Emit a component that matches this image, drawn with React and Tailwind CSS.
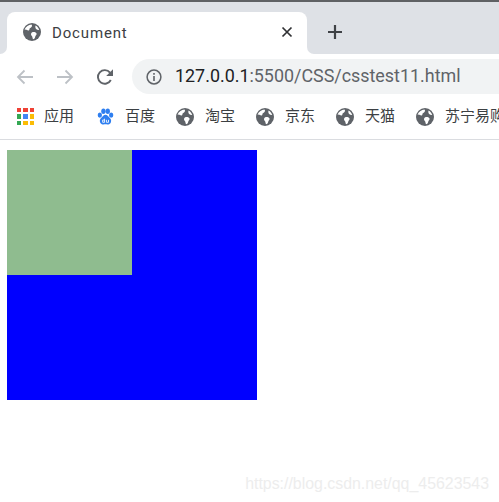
import React from 'react';

const Globe = ({ className }) => (
    <svg viewBox="0 0 18 18" className={className}>
        <circle cx="9" cy="9" r="9" fill="#5f6368" />
        <path d="M1.5 6.5 C3 3.5 5.5 1.8 8.5 1.6 C9.3 2.6 9.2 3.8 8 4.6 C7 5.2 6.5 5.4 6.4 6.4 C6.3 7.2 5.8 7.6 5.2 7.4 C4 7 2.8 6.6 1.5 6.5 Z" fill="#fff" />
        <path d="M9.2 9.2 C10.6 8.6 12.6 9 13.4 10.2 C13.9 11 13.4 11.8 12.8 12.4 C12.2 13 12.2 14 11.9 14.8 C11.5 15.9 10.6 16.4 10 16 C9.4 15.4 9.6 14.4 9.2 13.6 C8.8 12.8 8 12.2 8 11.2 C8 10.3 8.4 9.6 9.2 9.2 Z" fill="#fff" />
        <path d="M12.5 2.4 C14.4 3.4 15.7 5 16.2 7 C15 7.2 13.9 6.8 13.1 6 C12.4 5.2 12.1 3.6 12.5 2.4 Z" fill="#fff" />
    </svg>
);

const Paw = () => (
    <svg viewBox="0 0 18 18" className="w-[17px] h-[18px]">
        <ellipse cx="3" cy="7" rx="2.3" ry="2.8" fill="#2f7ff0" />
        <ellipse cx="6.8" cy="3" rx="2.3" ry="2.9" fill="#2f7ff0" />
        <ellipse cx="11.4" cy="3" rx="2.3" ry="2.9" fill="#2f7ff0" />
        <ellipse cx="15" cy="7" rx="2.3" ry="2.8" fill="#2f7ff0" />
        <path d="M9 6.6 C11 6.6 11.8 8.6 13.4 9.8 C15.4 11.2 15.4 14 14.2 15.6 C13 17.4 10.6 16.8 9 16.8 C7.4 16.8 5 17.4 3.8 15.6 C2.6 14 2.6 11.2 4.6 9.8 C6.2 8.6 7 6.6 9 6.6 Z" fill="#2f7ff0" />
        <path d="M6 12.2 V14.6 H8 V10.8 M6 12.2 H8 M10 12 V14.6 H12.2 V12" fill="none" stroke="#fff" strokeWidth="0.9" />
    </svg>
);

const Apps = () => {
    const colors = ['bg-[#ef4135]', 'bg-[#ef4135]', 'bg-[#ef4135]', 'bg-[#34a853]', 'bg-[#4285f4]', 'bg-[#fbbc05]', 'bg-[#34a853]', 'bg-[#fbbc05]', 'bg-[#fbbc05]'];
    return (
        <div className="grid grid-cols-3 gap-[2px] w-[17px] h-[17px]">
            {colors.map((c, i) => <span key={i} className={`${c} w-[4.3px] h-[4.3px]`} />)}
        </div>
    );
};

const bookmarks = [
    { name: '百度', icon: <Paw />, w: 'w-[79px]' },
    { name: '淘宝', icon: <Globe className="w-[18px] h-[18px]" />, w: 'w-[80px]' },
    { name: '京东', icon: <Globe className="w-[18px] h-[18px]" />, w: 'w-[80px]' },
    { name: '天猫', icon: <Globe className="w-[18px] h-[18px]" />, w: 'w-[80px]' },
    { name: '苏宁易购', icon: <Globe className="w-[18px] h-[18px]" />, w: 'w-[90px]' },
];

export default function App() {
    return (
        <div className="w-[499px] h-[502px] overflow-hidden bg-white relative font-['Roboto','Noto_Sans_CJK_SC',sans-serif]">
            {/* Tab strip */}
            <div className="h-[2px] bg-[#5f6164]" />
            <div className="h-[52px] flex bg-white">
                <div className="w-[7px] bg-[#dee1e6] rounded-br-[7px]" />
                <div className="w-[300px] bg-[#dee1e6] pt-[10px]">
                    <div className="h-[42px] bg-white rounded-t-[8px] flex items-center pl-[16px] pr-[14px]">
                        <Globe className="w-[18px] h-[18px] mb-[2px]" />
                        <span className="ml-[11px] mt-[1px] text-[15px] text-[#3c4043] tracking-[0.85px]">Document</span>
                        <svg viewBox="0 0 12 12" className="w-[12px] h-[12px] ml-auto mb-[3px]">
                            <path d="M1.5 1.5 L10.5 10.5 M10.5 1.5 L1.5 10.5" stroke="#303134" strokeWidth="1.7" />
                        </svg>
                    </div>
                </div>
                <div className="flex-1 bg-[#dee1e6] rounded-bl-[7px] flex items-center pl-[20px] pt-[8px]">
                    <svg viewBox="0 0 16 16" className="w-[16px] h-[16px]">
                        <path d="M8 1 V15 M1 8 H15" stroke="#3f4246" strokeWidth="2.2" />
                    </svg>
                </div>
            </div>

            {/* Toolbar */}
            <div className="h-[40px] flex items-end">
                <div className="w-[132px] h-[35px] flex items-center pl-[16px]">
                    <svg viewBox="0 0 18 18" className="w-[18px] h-[18px]">
                        <path d="M17 9 H2 M8.5 2.5 L2 9 L8.5 15.5" fill="none" stroke="#bdc1c6" strokeWidth="1.8" />
                    </svg>
                    <svg viewBox="0 0 18 18" className="w-[18px] h-[18px] ml-[22px]">
                        <path d="M1 9 H16 M9.5 2.5 L16 9 L9.5 15.5" fill="none" stroke="#bdc1c6" strokeWidth="1.8" />
                    </svg>
                    <svg viewBox="0 0 18 18" className="w-[18px] h-[18px] ml-[22px]">
                        <path d="M14.8 12 A6.8 6.8 0 1 1 14 4.6" fill="none" stroke="#5f6368" strokeWidth="1.9" />
                        <path d="M17 1.2 V8 H10.2 Z" fill="#5f6368" />
                    </svg>
                </div>
                <div className="flex-1 h-[35px] bg-[#f1f3f4] rounded-l-full flex items-center pl-[14px]">
                    <svg viewBox="0 0 16 16" className="w-[16px] h-[16px]">
                        <circle cx="8" cy="8" r="6.9" fill="none" stroke="#5f6368" strokeWidth="1.5" />
                        <path d="M8 7 V12 M8 4 V5.8" stroke="#5f6368" strokeWidth="1.6" />
                    </svg>
                    <span className="ml-[13px] mb-[1px] text-[17.9px] text-[#5f6368] whitespace-nowrap">
                        <span className="text-[#202124]">127.0.0.1</span>:5500/CSS/csstest11.html
                    </span>
                </div>
            </div>

            {/* Bookmarks bar */}
            <div className="h-[46px] border-b border-[#dadce0] flex items-center pl-[17px] whitespace-nowrap">
                <div className="w-[80px] shrink-0 flex items-center">
                    <Apps />
                    <span className="ml-[10px] text-[15px] text-[#3c4043]">应用</span>
                </div>
                {bookmarks.map((b) => (
                    <div key={b.name} className={`${b.w} shrink-0 flex items-center`}>
                        {b.icon}
                        <span className="ml-[11px] text-[15px] text-[#3c4043]">{b.name}</span>
                    </div>
                ))}
            </div>

            {/* Page */}
            <div className="pt-[10px] pl-[7px]">
                <div className="w-[250px] h-[250px] bg-[#0000ff]">
                    <div className="w-[125px] h-[125px] bg-[#8fbc8f]" />
                </div>
            </div>

            {/* Watermark */}
            <span className="absolute right-[10px] bottom-[6px] text-[15.9px] text-[#ededed] font-['Liberation_Sans',sans-serif]">https://blog.csdn.net/qq_45623543</span>
        </div>
    );
}
